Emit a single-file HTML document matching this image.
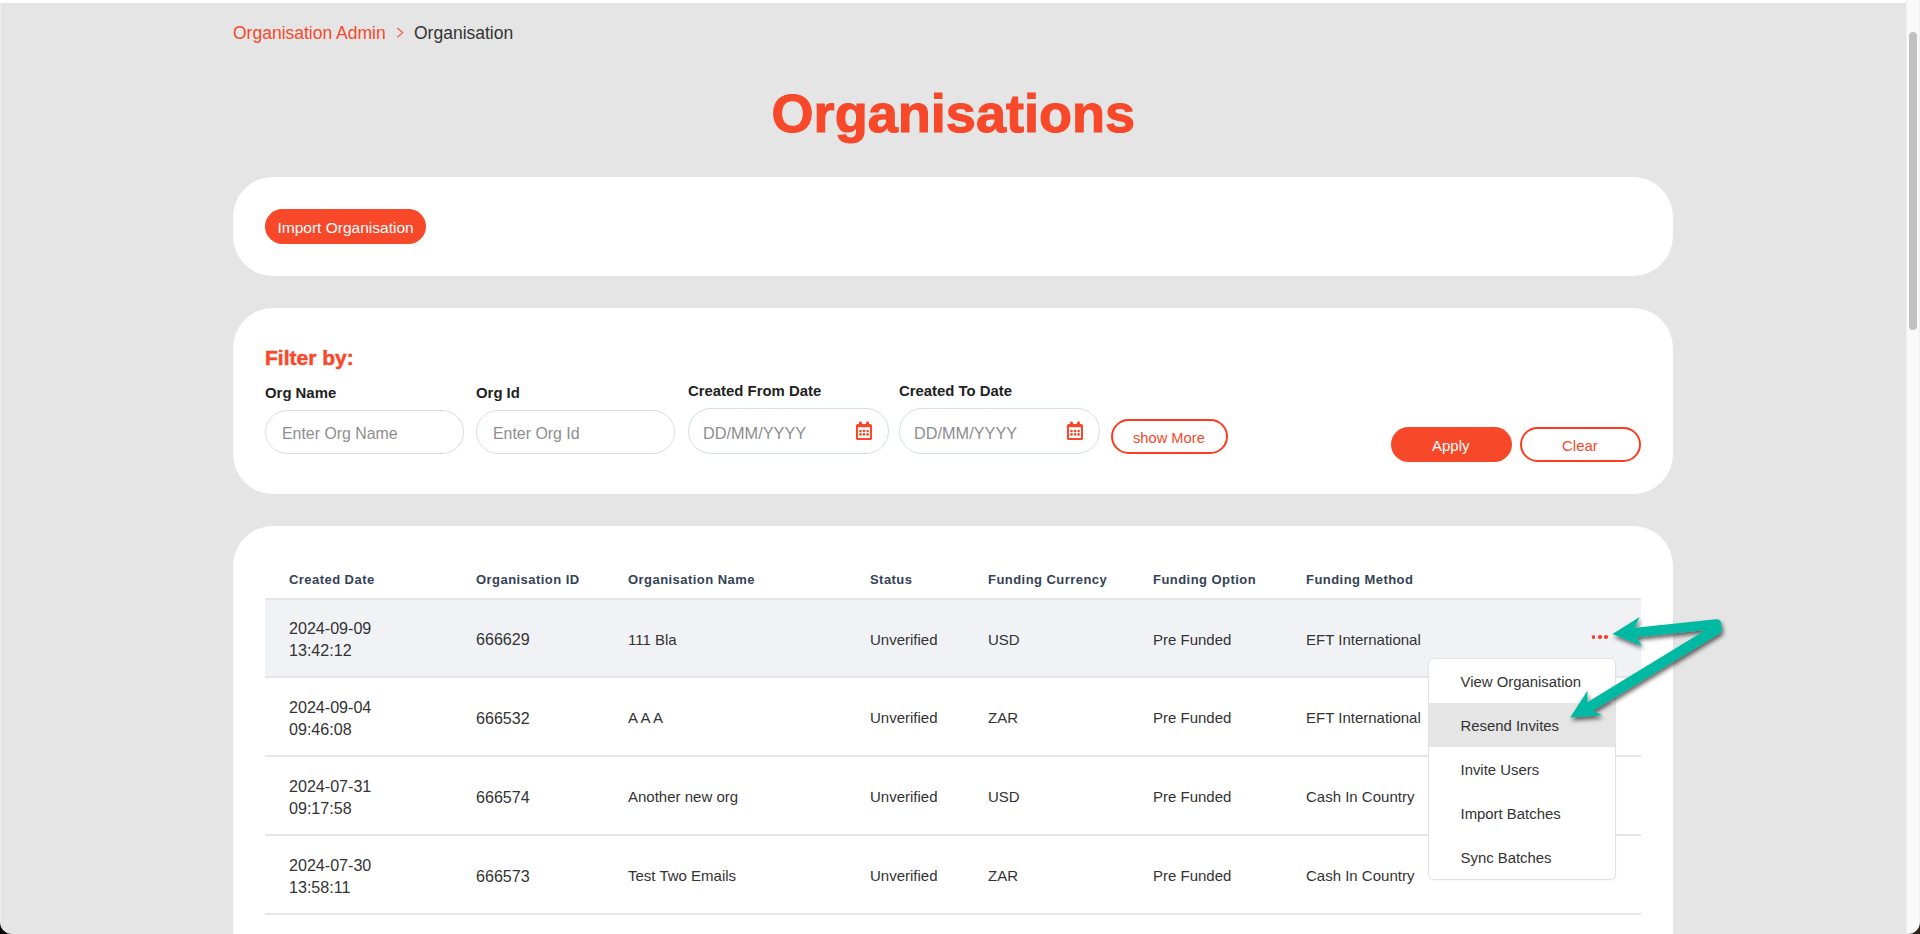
<!DOCTYPE html>
<html><head><meta charset="utf-8">
<style>
*{box-sizing:border-box;margin:0;padding:0}
html,body{width:1920px;height:934px;overflow:hidden}
body{position:relative;background:#e5e5e5;font-family:"Liberation Sans",sans-serif;color:#333}
.a{position:absolute;white-space:nowrap;line-height:1}
.topstrip{position:absolute;left:0;top:0;width:1906px;height:3px;background:#fff}
.leftedge{position:absolute;left:0;top:3px;width:1px;height:931px;background:#eeeeee}
.track{position:absolute;left:1906px;top:0;width:14px;height:934px;background:#fafafa;border-left:1px solid #efefef;border-right:1px solid #f0f0f0}
.thumb{position:absolute;left:1909px;top:32px;width:8px;height:298px;border-radius:4px;background:#c1c1c1}
.card{position:absolute;left:233px;width:1440px;background:#fff;border-radius:40px}
.red{color:#f7482a}
.btnfill{position:absolute;background:#f7482a;border-radius:20px}
.btnline{position:absolute;border:2px solid #ff3a1f;border-radius:20px;background:#fff}
.inp{position:absolute;border:1px solid #dcdcdc;border-radius:23px;background:#fff}
.inpd{position:absolute;border:1px solid #d3dde9;border-radius:23px;background:#fff}
.lbl{font-weight:700;color:#222;font-size:14.9px}
.ph{color:#8e8e8e}
.th{font-weight:700;color:#344256;font-size:13px;letter-spacing:0.45px}
.rowbg{position:absolute;left:265px;width:1376px;background:#f1f2f6}
.hr{position:absolute;left:265px;width:1376px;height:2px;background:#e6e6e6}
.td{color:#333;font-size:15px}
.num{font-size:16.1px}
.menu{position:absolute;left:1428px;top:658px;width:188px;height:222px;background:#fff;border:1px solid #e2e2e2;border-radius:6px;box-shadow:0 1px 3px rgba(0,0,0,0.04)}
.mi{position:absolute;font-size:14.9px;color:#333}
</style></head><body>
<div class="topstrip"></div>
<div class="leftedge"></div>

<!-- breadcrumb -->
<div class="a red" style="left:233px;top:25.4px;font-size:17.5px">Organisation Admin</div>
<svg class="a" style="left:394px;top:25px" width="12" height="16" viewBox="0 0 12 16"><path d="M3.3 3 L8.7 7.6 L3.3 12.3" fill="none" stroke="#f55a3e" stroke-width="1.25"/></svg>
<div class="a" style="left:414px;top:25.4px;font-size:17.5px;color:#333">Organisation</div>

<!-- title -->
<div class="a red" style="left:771.5px;top:86.3px;font-size:54.1px;font-weight:700;-webkit-text-stroke:1.1px #f7482a">Organisations</div>

<!-- card 1 -->
<div class="card" style="top:177px;height:99px"></div>
<div class="btnfill" style="left:265px;top:209px;width:161px;height:35px"></div>
<div class="a" style="left:277.5px;top:220px;font-size:15.5px;color:#fff">Import Organisation</div>

<!-- card 2 -->
<div class="card" style="top:308px;height:186px"></div>
<div class="a red" style="left:265px;top:347.2px;font-size:21px;font-weight:700;-webkit-text-stroke:0.5px #f7482a">Filter by:</div>

<div class="a lbl" style="left:265px;top:385.5px">Org Name</div>
<div class="inp" style="left:265px;top:410px;width:199px;height:44px"></div>
<div class="a ph" style="left:282px;top:425.5px;font-size:15.9px">Enter Org Name</div>

<div class="a lbl" style="left:476px;top:385.5px">Org Id</div>
<div class="inp" style="left:476px;top:410px;width:199px;height:44px"></div>
<div class="a ph" style="left:493px;top:425.5px;font-size:15.9px">Enter Org Id</div>

<div class="a lbl" style="left:688px;top:383.5px">Created From Date</div>
<div class="inpd" style="left:688px;top:408px;width:201px;height:46px"></div>
<div class="a ph" style="left:703px;top:425px;font-size:16.3px">DD/MM/YYYY</div>

<div class="a lbl" style="left:899px;top:383.5px">Created To Date</div>
<div class="inpd" style="left:899px;top:408px;width:201px;height:46px"></div>
<div class="a ph" style="left:914px;top:425px;font-size:16.3px">DD/MM/YYYY</div>

<svg class="a" style="left:856px;top:421px" width="16" height="19" viewBox="0 0 16 19"><g fill="#f7482a"><rect x="3" y="0.6" width="3" height="3.4" rx="1.2"/><rect x="10" y="0.6" width="3" height="3.4" rx="1.2"/><path d="M1.5 3 H14.5 A1.5 1.5 0 0 1 16 4.5 V17.5 A1.5 1.5 0 0 1 14.5 19 H1.5 A1.5 1.5 0 0 1 0 17.5 V4.5 A1.5 1.5 0 0 1 1.5 3 Z M2 6.2 V17 H14 V6.2 Z" fill-rule="evenodd"/><circle cx="4.5" cy="10" r="1.3"/><circle cx="8" cy="10" r="1.3"/><circle cx="11.6" cy="10" r="1.3"/><circle cx="4.5" cy="13.4" r="1.3"/><circle cx="8" cy="13.4" r="1.3"/><circle cx="11.6" cy="13.4" r="1.3"/></g></svg>
<svg class="a" style="left:1067px;top:421px" width="16" height="19" viewBox="0 0 16 19"><g fill="#f7482a"><rect x="3" y="0.6" width="3" height="3.4" rx="1.2"/><rect x="10" y="0.6" width="3" height="3.4" rx="1.2"/><path d="M1.5 3 H14.5 A1.5 1.5 0 0 1 16 4.5 V17.5 A1.5 1.5 0 0 1 14.5 19 H1.5 A1.5 1.5 0 0 1 0 17.5 V4.5 A1.5 1.5 0 0 1 1.5 3 Z M2 6.2 V17 H14 V6.2 Z" fill-rule="evenodd"/><circle cx="4.5" cy="10" r="1.3"/><circle cx="8" cy="10" r="1.3"/><circle cx="11.6" cy="10" r="1.3"/><circle cx="4.5" cy="13.4" r="1.3"/><circle cx="8" cy="13.4" r="1.3"/><circle cx="11.6" cy="13.4" r="1.3"/></g></svg>
<div class="btnline" style="left:1111px;top:419px;width:117px;height:35px"></div>
<div class="a red" style="left:1133px;top:430.5px;font-size:14.7px">show More</div>

<div class="btnfill" style="left:1391px;top:427px;width:121px;height:35px"></div>
<div class="a" style="left:1432px;top:437.5px;font-size:15px;color:#fff">Apply</div>
<div class="btnline" style="left:1520px;top:427px;width:121px;height:35px"></div>
<div class="a red" style="left:1562px;top:437.5px;font-size:15px">Clear</div>

<!-- card 3 -->
<div class="card" style="top:526px;height:460px"></div>

<!-- table -->
<div class="a th" style="left:289px;top:573px">Created Date</div>
<div class="a th" style="left:476px;top:573px">Organisation ID</div>
<div class="a th" style="left:628px;top:573px">Organisation Name</div>
<div class="a th" style="left:870px;top:573px">Status</div>
<div class="a th" style="left:988px;top:573px">Funding Currency</div>
<div class="a th" style="left:1153px;top:573px">Funding Option</div>
<div class="a th" style="left:1306px;top:573px">Funding Method</div>
<div class="rowbg" style="top:600px;height:76px"></div>
<div class="hr" style="top:598px"></div>
<div class="hr" style="top:676px"></div>
<div class="hr" style="top:755px"></div>
<div class="hr" style="top:834px"></div>
<div class="hr" style="top:913px"></div>
<div class="a td num" style="left:289px;top:620.1px">2024-09-09</div>
<div class="a td num" style="left:289px;top:642.2px">13:42:12</div>
<div class="a td num" style="left:476px;top:631.1px">666629</div>
<div class="a td" style="left:628px;top:631.8px">111 Bla</div>
<div class="a td" style="left:870px;top:631.8px">Unverified</div>
<div class="a td" style="left:988px;top:631.8px">USD</div>
<div class="a td" style="left:1153px;top:631.8px">Pre Funded</div>
<div class="a td" style="left:1306px;top:631.8px">EFT International</div>
<div class="a td num" style="left:289px;top:698.6px">2024-09-04</div>
<div class="a td num" style="left:289px;top:720.7px">09:46:08</div>
<div class="a td num" style="left:476px;top:709.6px">666532</div>
<div class="a td" style="left:628px;top:710.3px">A A A</div>
<div class="a td" style="left:870px;top:710.3px">Unverified</div>
<div class="a td" style="left:988px;top:710.3px">ZAR</div>
<div class="a td" style="left:1153px;top:710.3px">Pre Funded</div>
<div class="a td" style="left:1306px;top:710.3px">EFT International</div>
<div class="a td num" style="left:289px;top:777.6px">2024-07-31</div>
<div class="a td num" style="left:289px;top:799.7px">09:17:58</div>
<div class="a td num" style="left:476px;top:788.6px">666574</div>
<div class="a td" style="left:628px;top:789.3px">Another new org</div>
<div class="a td" style="left:870px;top:789.3px">Unverified</div>
<div class="a td" style="left:988px;top:789.3px">USD</div>
<div class="a td" style="left:1153px;top:789.3px">Pre Funded</div>
<div class="a td" style="left:1306px;top:789.3px">Cash In Country</div>
<div class="a td num" style="left:289px;top:856.6px">2024-07-30</div>
<div class="a td num" style="left:289px;top:878.7px">13:58:11</div>
<div class="a td num" style="left:476px;top:867.6px">666573</div>
<div class="a td" style="left:628px;top:868.3px">Test Two Emails</div>
<div class="a td" style="left:870px;top:868.3px">Unverified</div>
<div class="a td" style="left:988px;top:868.3px">ZAR</div>
<div class="a td" style="left:1153px;top:868.3px">Pre Funded</div>
<div class="a td" style="left:1306px;top:868.3px">Cash In Country</div>
<div class="scroll"></div>
<div class="track"></div>
<div class="thumb"></div>
<!-- dots -->
<div class="a" style="left:1591.9px;top:635.2px;width:3.6px;height:3.6px;border-radius:1.8px;background:#ff3a1f"></div>
<div class="a" style="left:1598.1px;top:635.2px;width:3.6px;height:3.6px;border-radius:1.8px;background:#ff3a1f"></div>
<div class="a" style="left:1604.4px;top:635.2px;width:3.6px;height:3.6px;border-radius:1.8px;background:#ff3a1f"></div>
<!-- menu -->
<div class="menu">
<div style="position:absolute;left:0;top:44px;width:186px;height:44px;background:#e5e5e5"></div>
</div>
<div class="a mi" style="left:1460.5px;top:675.4px">View Organisation</div>
<div class="a mi" style="left:1460.5px;top:719.4px">Resend Invites</div>
<div class="a mi" style="left:1460.5px;top:763.4px">Invite Users</div>
<div class="a mi" style="left:1460.5px;top:807.4px">Import Batches</div>
<div class="a mi" style="left:1460.5px;top:851.4px">Sync Batches</div>
<!-- arrows -->
<svg class="a" style="left:0;top:0" width="1920" height="934" viewBox="0 0 1920 934">
<defs><filter id="sh" x="-20%" y="-20%" width="140%" height="140%"><feDropShadow dx="1.5" dy="3" stdDeviation="2.3" flood-color="#000" flood-opacity="0.6"/></filter></defs>
<g filter="url(#sh)" fill="#00b9a3">
<path d="M1716.6 624 L1636 632.6" stroke="#00b9a3" stroke-width="9.6" stroke-linecap="round"/>
<path d="M1612.5 634 L1639.7 617 L1634.9 627 L1640 632.5 L1636.1 637.5 L1642.3 646 Z"/>
<path d="M1716.8 629.2 L1592 705.4" stroke="#00b9a3" stroke-width="10.2" stroke-linecap="round"/>
<path d="M1570.2 717.5 L1587.6 690.4 L1587.3 701.4 L1592.7 710.5 L1602.3 715.3 Z"/>
</g>
</svg>
<!-- window corners -->
<svg class="a" style="left:0;top:922px" width="12" height="12" viewBox="0 0 12 12"><path d="M0 0 L0 12 L12 12 A12 12 0 0 1 0 0 Z" fill="#000"/></svg>
<svg class="a" style="left:1908px;top:922px" width="12" height="12" viewBox="0 0 12 12"><path d="M12 0 L12 12 L0 12 A12 12 0 0 0 12 0 Z" fill="#2b2118"/></svg>
</body></html>
